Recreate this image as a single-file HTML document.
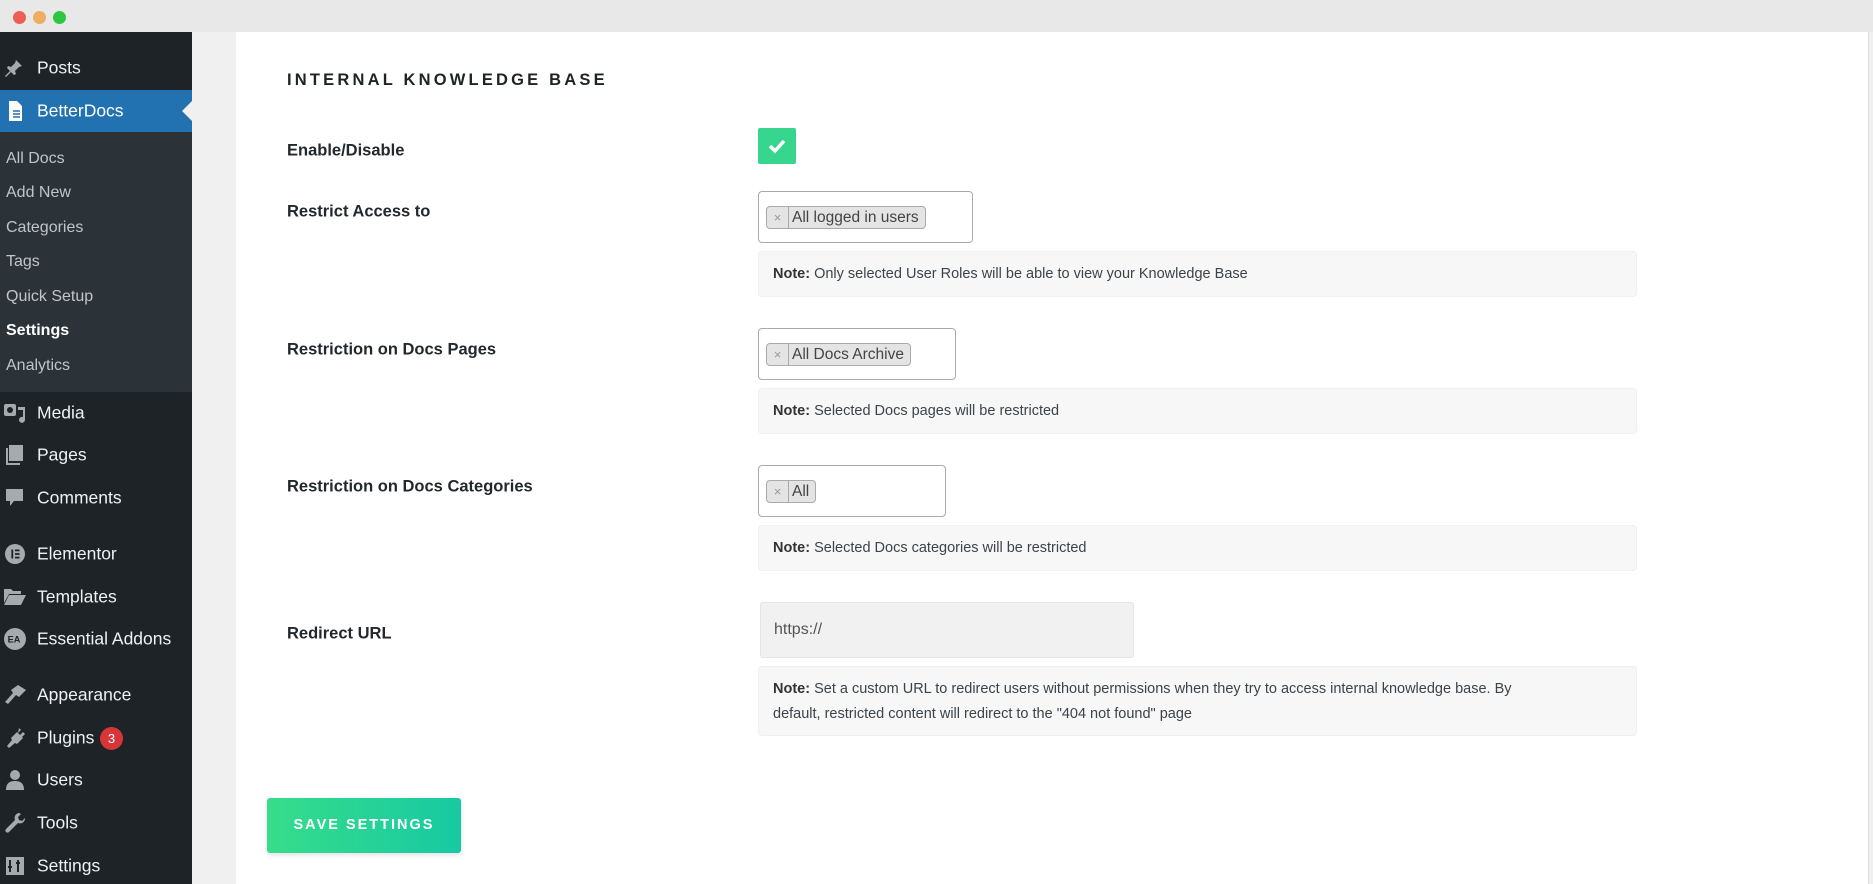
<!DOCTYPE html>
<html><head><meta charset="utf-8">
<style>
*{box-sizing:border-box;margin:0;padding:0}
body{width:1873px;height:884px;overflow:hidden;background:#f0f0f1;font-family:"Liberation Sans",sans-serif;position:relative}
.top{position:absolute;left:0;top:0;width:1873px;height:32px;background:#e8e8e8}
.dot{position:absolute;top:11px;width:13px;height:13px;border-radius:50%}
.side{position:absolute;left:0;top:32px;width:192px;height:852px;background:#1d2327}
.sub{position:absolute;left:0;top:132px;width:192px;height:260px;background:#2c3338}
.mi{position:absolute;left:37px;color:#f0f0f1;font-size:17.5px;transform:translateY(-50%)}
.ic{position:absolute;left:4px;width:22px;height:20px;transform:translateY(-50%)}
.si{position:absolute;left:6px;color:#c3c4c7;font-size:16px;transform:translateY(-50%)}
.main{position:absolute;left:236px;top:32px;width:1633px;height:852px;background:#fff;border-right:1px solid #ddd}
.a{position:absolute}
.lbl{position:absolute;left:287px;font-weight:bold;font-size:16.5px;color:#23282d;transform:translateY(-50%)}
.sel{position:absolute;left:758px;height:52px;border:1px solid #aaa;border-radius:4px;background:#fff}
.tag{position:absolute;left:7px;top:14px;height:23px;border:1px solid #aaa;border-radius:4px;background:#e4e4e4;font-size:15.5px;color:#444;line-height:21px;display:flex}
.tag .x{width:22px;text-align:center;color:#999;border-right:1px solid #aaa;font-size:13px}
.tag .t{padding:0 6px 0 3px}
.note{position:absolute;left:758px;width:879px;background:#f7f7f7;border:1px solid #f0f0f0;border-radius:4px;font-size:14.5px;color:#3c434a;padding:0 14px;line-height:25px}
.note b{color:#333}
</style></head><body>
<div class="top">
<div class="dot" style="left:13px;background:#ed5f56"></div>
<div class="dot" style="left:33px;background:#edad63"></div>
<div class="dot" style="left:53px;background:#2cc640"></div>
</div>
<div class="side">
<div class="a" style="left:0;top:58px;width:192px;height:42px;background:#2271b1"></div>
<div class="a" style="left:182px;top:69px;width:0;height:0;border-top:10px solid transparent;border-bottom:10px solid transparent;border-right:10px solid #f0f0f1"></div>
<div class="sub" style="top:100px"></div>
</div>
<svg class="ic" style="top:68px" viewBox="0 0 22 20"><path d="M12 2l6 6-3 1-4 4 1 3-2 1-3-3-5 5-1-1 5-5-3-3 1-2 3 1 4-4z" fill="#a7aaad"/></svg>
<svg class="ic" style="top:111px" viewBox="0 0 22 20"><path d="M5 0h8l5 5v15H5z" fill="#fff"/><path d="M9 10h7M9 13h7M9 16h7" stroke="#2271b1" stroke-width="1.5"/></svg>
<div class="mi" style="top:68px">Posts</div>
<div class="mi" style="top:111px;color:#fff">BetterDocs</div>
<div class="si" style="top:159px">All Docs</div>
<div class="si" style="top:193px">Add New</div>
<div class="si" style="top:228px">Categories</div>
<div class="si" style="top:262px">Tags</div>
<div class="si" style="top:297px">Quick Setup</div>
<div class="si" style="top:331px;color:#fff;font-weight:bold">Settings</div>
<div class="si" style="top:366px">Analytics</div>
<svg class="ic" style="top:413px" viewBox="0 0 22 20"><rect x="0" y="1" width="12" height="12" rx="2" fill="#a7aaad"/><circle cx="6" cy="7" r="3" fill="#1d2327"/><path d="M14 4h7v13a3 3 0 1 1-2-3V7h-5z" fill="#a7aaad"/></svg>
<div class="mi" style="top:413px">Media</div>
<svg class="ic" style="top:455px" viewBox="0 0 22 20"><path d="M5 0h14v16H5z" fill="#a7aaad"/><path d="M2 3v17h14v-2H4V3z" fill="#a7aaad"/></svg>
<div class="mi" style="top:455px">Pages</div>
<svg class="ic" style="top:498px" viewBox="0 0 22 20"><path d="M2 1h17v12H10l-4 5v-5H2z" fill="#a7aaad"/></svg>
<div class="mi" style="top:498px">Comments</div>
<svg class="ic" style="top:554px" viewBox="0 0 22 22"><circle cx="11" cy="11" r="11" fill="#a7aaad"/><path d="M7 6h2v10H7zM11 6h5v2h-5zM11 10h5v2h-5zM11 14h5v2h-5z" fill="#1d2327"/></svg>
<div class="mi" style="top:554px">Elementor</div>
<svg class="ic" style="top:597px" viewBox="0 0 22 20"><path d="M0 2h7l2 2h8v3H5L0 16z" fill="#a7aaad"/><path d="M5 8h17l-5 10H0z" fill="#a7aaad"/></svg>
<div class="mi" style="top:597px">Templates</div>
<svg class="ic" style="top:639px;height:24px" viewBox="0 0 24 24"><circle cx="12" cy="12" r="12" fill="#a7aaad"/><text x="4" y="16" font-size="10" font-weight="bold" fill="#1d2327" font-family="Liberation Sans">EA</text></svg>
<div class="mi" style="top:639px">Essential Addons</div>
<svg class="ic" style="top:695px" viewBox="0 0 22 20"><path d="M14 0l8 5-7 7-3-2-8 9-3-2 8-9-2-3z" fill="#a7aaad"/></svg>
<div class="mi" style="top:695px">Appearance</div>
<svg class="ic" style="top:738px" viewBox="0 0 22 20"><path d="M15 0l2 2-3 3 2 2 3-3 2 2-3 3 1 1-6 6-2-1-6 5-2-2 5-6-1-2 6-6 1 1z" fill="#a7aaad"/></svg>
<div class="mi" style="top:738px">Plugins</div>
<div class="a" style="left:100px;top:727px;width:23px;height:23px;border-radius:50%;background:#d63638;color:#fff;font-size:13px;text-align:center;line-height:23px">3</div>
<svg class="ic" style="top:780px" viewBox="0 0 22 20"><circle cx="11" cy="5" r="5" fill="#a7aaad"/><path d="M2 20c0-7 4-9 9-9s9 2 9 9z" fill="#a7aaad"/></svg>
<div class="mi" style="top:780px">Users</div>
<svg class="ic" style="top:823px" viewBox="0 0 22 20"><path d="M15 0a5 5 0 0 0-4 7L2 16a2 2 0 0 0 3 3l9-9a5 5 0 0 0 7-5l-3 3-3-1-1-3 3-3z" fill="#a7aaad"/></svg>
<div class="mi" style="top:823px">Tools</div>
<svg class="ic" style="top:866px" viewBox="0 0 22 20"><rect x="2" y="1" width="18" height="18" fill="#a7aaad"/><path d="M6 4v12M4 11h4M14 4v12M12 7h4" stroke="#1d2327" stroke-width="2"/></svg>
<div class="mi" style="top:866px">Settings</div>

<div class="main"></div>
<div class="a" style="left:287px;top:71px;font-size:16.5px;letter-spacing:3.2px;color:#1d2327;font-weight:bold">INTERNAL KNOWLEDGE BASE</div>
<div class="lbl" style="top:151px">Enable/Disable</div>
<div class="lbl" style="top:212px">Restrict Access to</div>
<div class="lbl" style="top:350px">Restriction on Docs Pages</div>
<div class="lbl" style="top:487px">Restriction on Docs Categories</div>
<div class="lbl" style="top:634px">Redirect URL</div>

<div class="a" style="left:758px;top:128px;width:38px;height:36px;background:#37d68f;border-radius:2px"><svg width="38" height="36" viewBox="0 0 38 36"><path d="M12 18l5 5 9-10" stroke="#fff" stroke-width="3.5" fill="none"/></svg></div>

<div class="sel" style="top:191px;width:215px"><div class="tag"><span class="x">×</span><span class="t">All logged in users</span></div></div>
<div class="note" style="top:251px;height:46px;line-height:44px"><b>Note:</b> Only selected User Roles will be able to view your Knowledge Base</div>

<div class="sel" style="top:328px;width:198px"><div class="tag"><span class="x">×</span><span class="t">All Docs Archive</span></div></div>
<div class="note" style="top:388px;height:46px;line-height:44px"><b>Note:</b> Selected Docs pages will be restricted</div>

<div class="sel" style="top:465px;width:188px"><div class="tag"><span class="x">×</span><span class="t">All</span></div></div>
<div class="note" style="top:525px;height:46px;line-height:44px"><b>Note:</b> Selected Docs categories will be restricted</div>

<div class="a" style="left:760px;top:602px;width:374px;height:56px;background:#f1f1f1;border:1px solid #e5e5e5;border-radius:3px;font-size:16px;color:#555;line-height:54px;padding-left:13px">https://</div>
<div class="note" style="top:666px;height:70px;padding-top:10px"><b>Note:</b> Set a custom URL to redirect users without permissions when they try to access internal knowledge base. By<br>default, restricted content will redirect to the "404 not found" page</div>

<div class="a" style="left:267px;top:798px;width:194px;height:55px;border-radius:3px;background:linear-gradient(90deg,#36dd8b,#17c9a2);box-shadow:0 2px 6px rgba(0,0,0,.12);color:#fff;font-weight:bold;font-size:14.5px;letter-spacing:2px;text-align:center;line-height:55px">SAVE SETTINGS</div>
</body></html>
